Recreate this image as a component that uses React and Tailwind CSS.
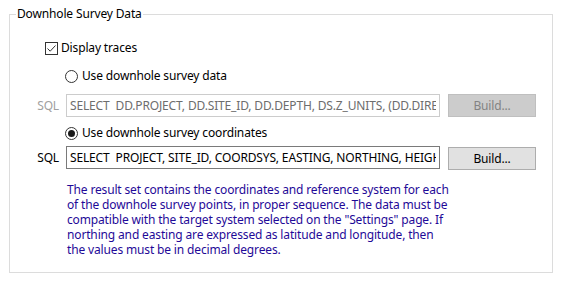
import React from 'react'

function CheckBox({ checked }) {
  return (
    <span className="w-[13px] h-[13px] border border-[#333333] bg-white flex items-center justify-center shrink-0">
      {checked && (
        <svg width="11" height="11" viewBox="0 0 11 11">
          <path d="M1.5 5.5 L4.2 8.2 L9.5 2.5" fill="none" stroke="#333333" strokeWidth="1" />
        </svg>
      )}
    </span>
  )
}

function Radio({ checked }) {
  return (
    <span className="w-[13px] h-[13px] rounded-full border border-[#333333] bg-white flex items-center justify-center shrink-0">
      {checked && <span className="w-[7px] h-[7px] rounded-full bg-[#1a1a1a]" />}
    </span>
  )
}

function SqlRow({ value, disabled }) {
  return (
    <div className="flex items-start">
      <div className={`w-[50px] h-[23px] flex items-center justify-end pr-[1px] ${disabled ? 'text-[#a0a0a0]' : 'text-black'}`}>SQL</div>
      <input
        readOnly
        disabled={disabled}
        value={value}
        className={`ml-[6px] w-[374px] h-[23px] px-[3px] bg-white outline-none border ${disabled ? 'border-[#cccccc] text-[#6d6d6d]' : 'border-[#7a7a7a] text-black'}`}
      />
      <button
        disabled={disabled}
        className={`ml-[8px] w-[88px] h-[23px] border ${disabled ? 'mt-0 bg-[#cccccc] border-[#bfbfbf] text-[#838383]' : 'mt-[1px] bg-[#e1e1e1] border-[#adadad] text-black'}`}
      >
        Build...
      </button>
    </div>
  )
}

export default function App() {
  return (
    <div className="w-[563px] h-[284px] bg-white pt-[6px] pl-[9px] text-[12px] leading-4 tracking-[-0.15px] text-black font-['Noto_Sans',sans-serif]">
      <fieldset className="w-[544px] h-[267px] border border-[#dcdcdc] px-0 pb-0">
        <legend className="ml-[6px] px-[1px] leading-4">Downhole Survey Data</legend>

        <label className="mt-[18px] ml-[35px] h-4 flex items-center gap-[3px]">
          <CheckBox checked />
          <span>Display traces</span>
        </label>

        <label className="mt-[12px] ml-[55px] h-4 flex items-center gap-[4px]">
          <Radio />
          <span>Use downhole survey data</span>
        </label>

        <div className="mt-[10px]">
          <SqlRow disabled value="SELECT  DD.PROJECT, DD.SITE_ID, DD.DEPTH, DS.Z_UNITS, (DD.DIRECTION)" />
        </div>

        <label className="mt-[8px] ml-[55px] h-4 flex items-center gap-[4px]">
          <Radio checked />
          <span>Use downhole survey coordinates</span>
        </label>

        <div className="mt-[5px]">
          <SqlRow value="SELECT  PROJECT, SITE_ID, COORDSYS, EASTING, NORTHING, HEIGHT" />
        </div>

        <p className="mt-[12px] ml-[57px] leading-[15px] text-[#1f0a98]">
          The result set contains the coordinates and reference system for each<br />
          of the downhole survey points, in proper sequence. The data must be<br />
          compatible with the target system selected on the "Settings" page. If<br />
          northing and easting are expressed as latitude and longitude, then<br />
          the values must be in decimal degrees.
        </p>
      </fieldset>
    </div>
  )
}
